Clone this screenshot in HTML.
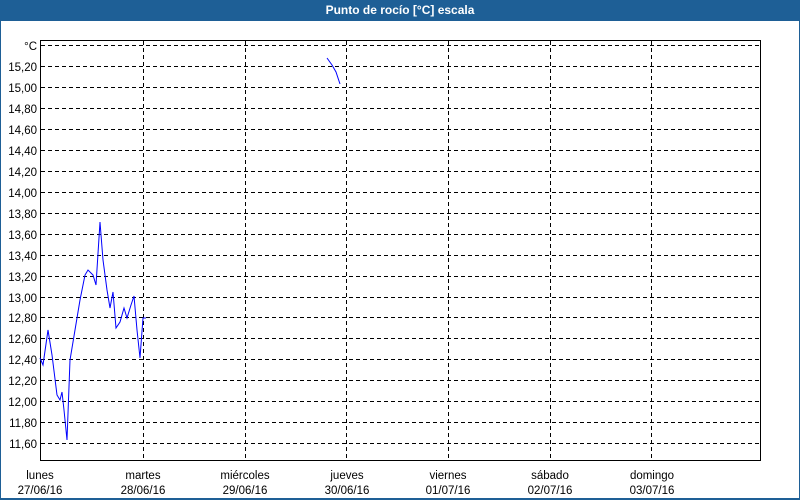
<!DOCTYPE html>
<html><head><style>
body{margin:0;width:800px;height:500px;background:#fff;position:relative;overflow:hidden;font-family:"Liberation Sans",sans-serif;}
.t{position:absolute;left:0;top:0;width:800px;height:21px;background:#1e5f96;color:#fff;font-weight:bold;font-size:12px;line-height:20px;text-align:center}
</style></head><body>
<div class="t">Punto de rocío [°C] escala</div>
<div style="position:absolute;left:0;top:21px;width:1px;height:479px;background:#1e5f96"></div>
<div style="position:absolute;right:0;top:21px;width:1px;height:479px;background:#1e5f96"></div>
<div style="position:absolute;left:0;bottom:0;width:800px;height:2px;background:#1e5f96"></div>
<svg width="800" height="500" style="position:absolute;left:0;top:0" font-family="Liberation Sans, sans-serif" font-size="11.5">
<g stroke="#000" stroke-dasharray="4,3" stroke-width="1">
<path d="M41 45.5H760M41 66.5H760M41 87.5H760M41 108.5H760M41 129.5H760M41 150.5H760M41 171.5H760M41 192.5H760M41 213.5H760M41 234.5H760M41 255.5H760M41 276.5H760M41 297.5H760M41 317.5H760M41 338.5H760M41 359.5H760M41 380.5H760M41 401.5H760M41 422.5H760M41 443.5H760"/>
<path d="M143.5 41V460M245.5 41V460M346.5 41V460M448.5 41V460M550.5 41V460M651.5 41V460"/>
</g>
<rect x="40.5" y="40.5" width="720" height="420" fill="none" stroke="#000"/>
<g text-anchor="end" fill="#000">
<text x="37" y="50">°C</text>
<text x="37" y="71">15,20</text><text x="37" y="92">15,00</text><text x="37" y="113">14,80</text><text x="37" y="134">14,60</text><text x="37" y="155">14,40</text><text x="37" y="176">14,20</text><text x="37" y="197">14,00</text><text x="37" y="218">13,80</text><text x="37" y="239">13,60</text><text x="37" y="260">13,40</text><text x="37" y="281">13,20</text><text x="37" y="302">13,00</text><text x="37" y="322">12,80</text><text x="37" y="343">12,60</text><text x="37" y="364">12,40</text><text x="37" y="385">12,20</text><text x="37" y="406">12,00</text><text x="37" y="427">11,80</text><text x="37" y="448">11,60</text>
</g>
<g text-anchor="middle" fill="#000">
<text x="40" y="479">lunes</text><text x="40" y="494">27/06/16</text>
<text x="143" y="479">martes</text><text x="143" y="494">28/06/16</text>
<text x="245" y="479">miércoles</text><text x="245" y="494">29/06/16</text>
<text x="347" y="479">jueves</text><text x="347" y="494">30/06/16</text>
<text x="448" y="479">viernes</text><text x="448" y="494">01/07/16</text>
<text x="550" y="479">sábado</text><text x="550" y="494">02/07/16</text>
<text x="652" y="479">domingo</text><text x="652" y="494">03/07/16</text>
</g>
<g fill="none" stroke="#0000ff" stroke-width="1">
<polyline points="40,358 43,365 48,330 52,355 57,395 60,400 62,392 64,410 67,440 70,360 75,330 80,300 85,275 88,270 93,275 96,285 100,222 103,260 107,290 110,308 113,292 116,328 120,322 124,308 127,318 131,305 134,296 137,330 140,358 143,318 146,318"/>
<polyline points="327,58 332,65 336,72 340,84"/>
</g>
</svg>
</body></html>
